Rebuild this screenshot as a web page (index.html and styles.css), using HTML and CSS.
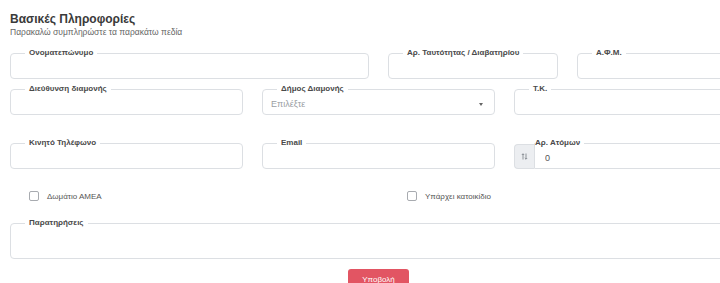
FILE: index.html
```html
<!DOCTYPE html>
<html lang="el">
<head>
    <meta charset="UTF-8">
    <meta name="viewport" content="width=device-width, initial-scale=1.0">
    <title>Βασικές Πληροφορίες</title>
    <link rel="stylesheet" href="styles.css">
</head>
<body>
    <div class="page">
        <h2 class="title">Βασικές Πληροφορίες</h2>
        <p class="subtitle">Παρακαλώ συμπληρώστε τα παρακάτω πεδία</p>

        <form class="booking-form" onsubmit="return false">
            <div class="row row-first">
                <fieldset class="field span-6">
                    <legend>Ονοματεπώνυμο</legend>
                    <input type="text" class="field-input">
                </fieldset>
                <fieldset class="field span-3">
                    <legend>Αρ. Ταυτότητας / Διαβατηρίου</legend>
                    <input type="text" class="field-input">
                </fieldset>
                <fieldset class="field span-3">
                    <legend>Α.Φ.Μ.</legend>
                    <input type="text" class="field-input">
                </fieldset>
            </div>

            <div class="row row-second">
                <fieldset class="field span-4">
                    <legend>Διεύθυνση διαμονής</legend>
                    <input type="text" class="field-input">
                </fieldset>
                <fieldset class="field span-4">
                    <legend>Δήμος Διαμονής</legend>
                    <div class="fake-select">
                        <span class="placeholder">Επιλέξτε</span>
                        <span class="caret"></span>
                    </div>
                </fieldset>
                <fieldset class="field span-4">
                    <legend>Τ.Κ.</legend>
                    <input type="text" class="field-input">
                </fieldset>
            </div>

            <div class="row row-third">
                <fieldset class="field span-4">
                    <legend>Κινητό Τηλέφωνο</legend>
                    <input type="text" class="field-input">
                </fieldset>
                <fieldset class="field span-4">
                    <legend>Email</legend>
                    <input type="email" class="field-input">
                </fieldset>
                <div class="input-group span-4">
                    <span class="addon">
                        <svg width="7" height="7" viewBox="0 0 7 7" fill="none" stroke="#7a7f86" stroke-width="0.8">
                            <path d="M2 6.5V0.8M0.8 2L2 0.8L3.2 2"/>
                            <path d="M5 0.5V6.2M3.8 5L5 6.2L6.2 5"/>
                        </svg>
                    </span>
                    <fieldset class="field field-attached">
                        <legend>Αρ. Ατόμων</legend>
                        <input type="text" class="field-input field-value" value="0">
                    </fieldset>
                </div>
            </div>

            <div class="row row-checks">
                <label class="check span-6">
                    <input type="checkbox">
                    <span class="check-text">Δωμάτιο ΑΜΕΑ</span>
                </label>
                <label class="check span-6">
                    <input type="checkbox">
                    <span class="check-text">Υπάρχει κατοικίδιο</span>
                </label>
            </div>

            <div class="row row-notes">
                <fieldset class="field span-12">
                    <legend>Παρατηρήσεις</legend>
                    <textarea class="field-input field-area"></textarea>
                </fieldset>
            </div>

            <div class="actions">
                <button type="submit" class="submit-btn">Υποβολή</button>
            </div>
        </form>
    </div>
</body>
</html>
```

FILE: styles.css
```css
:root {
    --text: #333;
    --muted: #666;
    --label: #4a4a4a;
    --border: #dcdfe3;
    --addon: #eceef1;
    --danger: #e25563;
}

html, body {
    margin: 0;
    padding: 0;
    overflow: hidden;
    background-color: #fff;
}

body {
    font-family: "Liberation Sans", Arial, sans-serif;
    color: var(--text);
}

.page {
    width: 737px;
    padding: 11px 0 0 10px;
}

.title {
    margin: 0;
    font-size: 12px;
    line-height: 16px;
    font-weight: 700;
    color: #3a3a3a;
}

.subtitle {
    margin: 0;
    font-size: 8.5px;
    line-height: 10px;
    color: var(--muted);
}

.row {
    display: grid;
    grid-template-columns: repeat(12, 44px);
    column-gap: 19px;
}

.row-first { margin-top: 11px; }
.row-second { margin-top: 5px; }
.row-third { margin-top: 23px; }
.row-checks { margin-top: 22px; }
.row-notes { margin-top: 17px; }

.span-3 { grid-column: span 3; }
.span-4 { grid-column: span 4; }
.span-6 { grid-column: span 6; }
.span-12 { grid-column: span 12; }

.field {
    margin: 0;
    padding: 0 10px;
    border: 1px solid var(--border);
    border-radius: 4px;
    min-width: 0;
}

.field legend {
    margin-left: 4px;
    padding: 0 4px;
    font-size: 8px;
    line-height: 10px;
    font-weight: 700;
    color: var(--label);
}

.field-input {
    display: block;
    width: 100%;
    height: 20px;
    padding: 0;
    border: none;
    outline: none;
    background: transparent;
    font-family: inherit;
    font-size: 8px;
    color: var(--text);
}

.field-value {
    font-size: 9px;
    color: #555;
}

.field-area {
    height: 30px;
    resize: none;
}

.fake-select {
    display: flex;
    justify-content: space-between;
    align-items: center;
    height: 20px;
    padding-right: 1px;
}

.placeholder {
    font-size: 9px;
    color: #9a9ea3;
    margin-left: -2px;
}

.caret {
    width: 0;
    height: 0;
    border-left: 2.5px solid transparent;
    border-right: 2.5px solid transparent;
    border-top: 3px solid #666;
}

.input-group {
    display: flex;
    align-items: flex-end;
}

.addon {
    display: flex;
    align-items: center;
    justify-content: center;
    width: 20px;
    height: 25px;
    background-color: var(--addon);
    border: 1px solid var(--border);
    border-right: none;
    border-radius: 4px 0 0 4px;
    box-sizing: border-box;
}

.field-attached {
    flex: 1;
    border-radius: 0 4px 4px 0;
}

.field-attached legend {
    margin-left: -10px;
    padding: 0 4px 0 0;
}

.check {
    display: flex;
    align-items: center;
    gap: 8px;
    padding-left: 19px;
    font-size: 8px;
    color: #555;
}

.check-text {
    color: #555;
}

.check input {
    appearance: none;
    -webkit-appearance: none;
    margin: 0;
    width: 10px;
    height: 10px;
    border: 1px solid #a8abb0;
    border-radius: 2px;
    background-color: #fff;
}

.actions {
    display: flex;
    justify-content: center;
    margin-top: 10px;
}

.submit-btn {
    height: 20px;
    padding: 0 14px;
    border: none;
    border-radius: 3px;
    background-color: var(--danger);
    color: #fff;
    font-family: inherit;
    font-size: 8px;
    cursor: pointer;
}
```
